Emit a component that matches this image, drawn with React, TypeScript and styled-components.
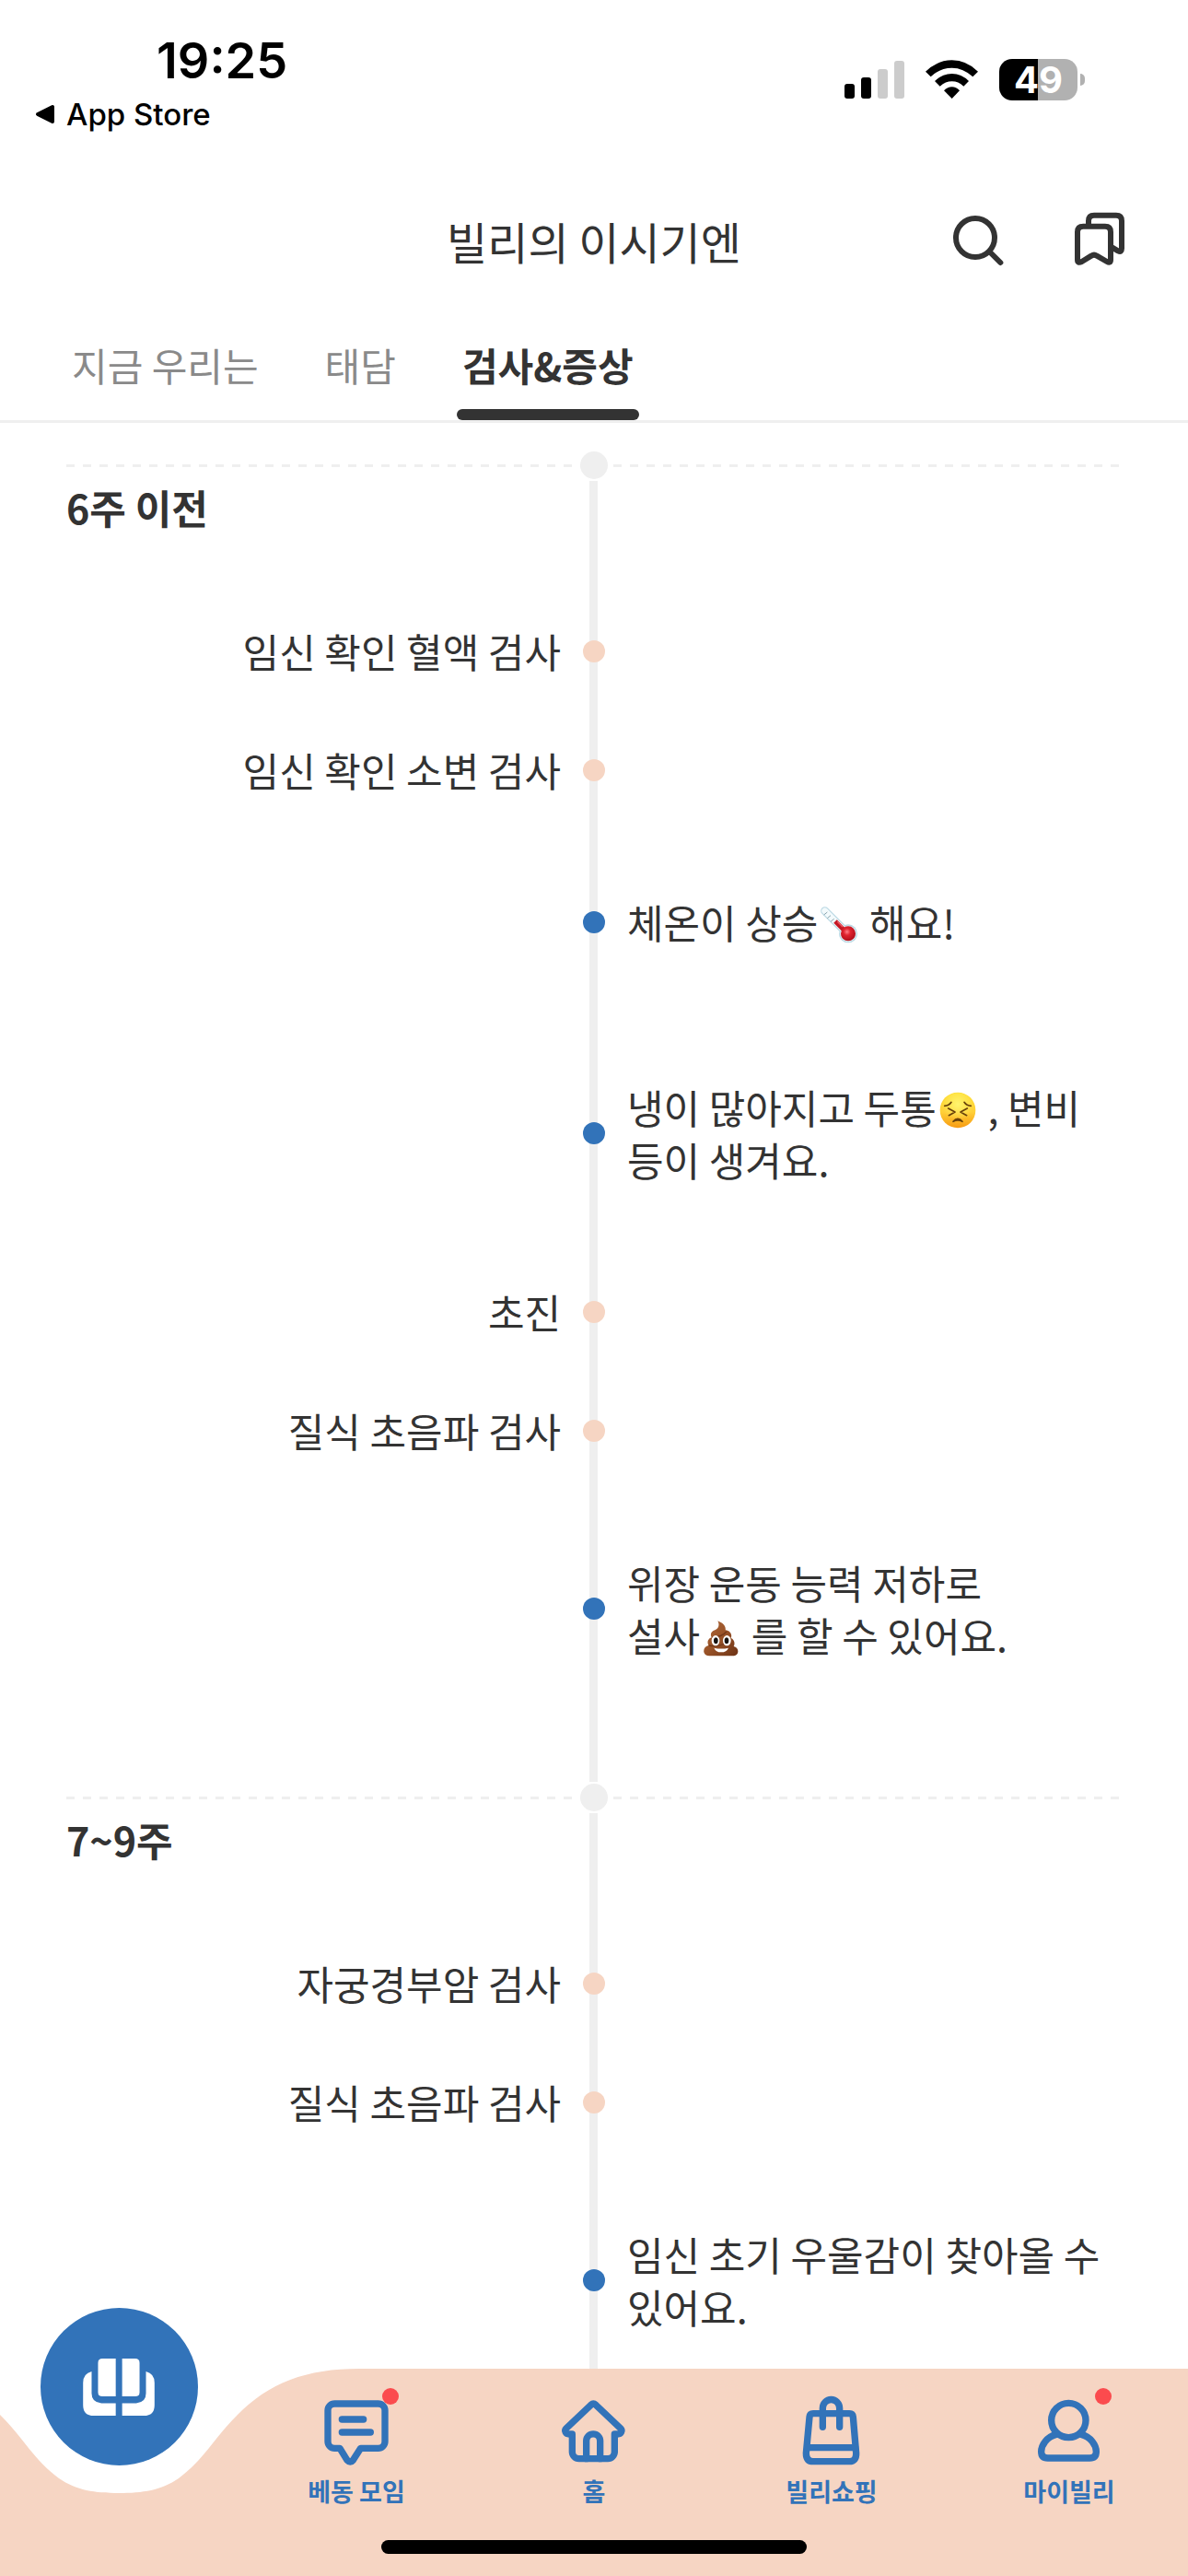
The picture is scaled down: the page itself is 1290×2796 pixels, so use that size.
import React from "react";
import styled, { createGlobalStyle } from "styled-components";

const color = {
  ink: "#333333",
  muted: "#8a8a8a",
  line: "#efefef",
  blue: "#3273b9",
  peach: "#f6d5c3",
  red: "#fb4b4e",
};

const GlobalStyle = createGlobalStyle`
  *, *::before, *::after { box-sizing: border-box; }
  body {
    margin: 0;
    background: #ffffff;
    color: ${color.ink};
    font-family: "Noto Sans CJK KR", sans-serif;
    word-break: keep-all;
  }
  button {
    border: 0;
    padding: 0;
    background: none;
    color: inherit;
    font: inherit;
    cursor: pointer;
  }
  svg { display: block; }
`;

const Screen = styled.div`
  display: flex;
  flex-direction: column;
  height: 100vh;
  overflow: hidden;
`;

const StatusBar = styled.div`
  display: flex;
  justify-content: space-between;
  align-items: flex-start;
  flex-shrink: 0;
  height: 186px;
  padding: 36px 120px 0 38px;
  color: #000000;
  font-family: Inter, sans-serif;
`;

const StatusLeft = styled.div`
  display: flex;
  flex-direction: column;
`;

const Clock = styled.span`
  padding-left: 132px;
  font-size: 54px;
  font-weight: 600;
  line-height: 60px;
`;

const BackLink = styled.a`
  display: flex;
  align-items: center;
  gap: 12px;
  margin-top: 8px;
  color: inherit;
  font-size: 33px;
  font-weight: 500;
  line-height: 40px;
  text-decoration: none;
`;

const StatusIcons = styled.div`
  display: flex;
  align-items: center;
  gap: 23px;
  padding-top: 28px;
`;

const Battery = styled.div`
  position: relative;
  width: 85px;
  height: 45px;
  border-radius: 14px;
  background: linear-gradient(to right, #000000 49%, #b1b1b1 49%);
  color: #ffffff;
  font-size: 40px;
  font-weight: 700;
  line-height: 45px;
  text-align: center;

  &::after {
    content: "";
    position: absolute;
    top: 16px;
    right: -8px;
    width: 5px;
    height: 13px;
    border-radius: 0 6px 6px 0;
    background: #b1b1b1;
  }
`;

const Header = styled.header`
  display: grid;
  grid-template-columns: 1fr auto 1fr;
  align-items: center;
  flex-shrink: 0;
  height: 150px;
  padding: 0 60px;
`;

const Title = styled.h1`
  grid-column: 2;
  margin: 0;
  font-size: 48px;
  font-weight: 400;
  line-height: 72px;
`;

const HeaderActions = styled.div`
  display: flex;
  justify-content: flex-end;
  gap: 60px;
`;

const Tabs = styled.nav`
  display: flex;
  gap: 60px;
  flex-shrink: 0;
  padding: 0 72px;
  border-bottom: 3px solid ${color.line};
`;

const Tab = styled.button<{ $active?: boolean }>`
  display: flex;
  flex-direction: column;
  padding: 30px 0 0;
  color: ${(p) => (p.$active ? color.ink : color.muted)};
  font-size: 42px;
  font-weight: ${(p) => (p.$active ? 700 : 400)};
  line-height: 60px;

  span { padding: 0 6px; }

  &::after {
    content: "";
    width: 100%;
    height: 12px;
    margin-top: 18px;
    border-radius: 6px;
    background: ${(p) => (p.$active ? color.ink : "transparent")};
  }
`;

const Timeline = styled.main`
  flex: 1;
  min-height: 0;
  overflow: hidden;
  padding: 31px 72px 0;
`;

const Section = styled.section`
  position: relative;
  padding-bottom: 61px;

  &::before {
    content: "";
    position: absolute;
    top: 32px;
    bottom: 2px;
    left: 50%;
    width: 9px;
    margin-left: -5px;
    background: ${color.line};
  }
`;

const Divider = styled.div`
  display: flex;
  align-items: center;
  justify-content: center;
  height: 30px;
  background: repeating-linear-gradient(
      to right,
      ${color.line} 0 9px,
      transparent 9px 18px
    )
    center / 100% 3px no-repeat;

  &::before {
    content: "";
    width: 30px;
    height: 30px;
    border-radius: 50%;
    background: ${color.line};
  }
`;

const Week = styled.h2`
  margin: 0 0 62px;
  font-size: 43px;
  font-weight: 700;
  line-height: 60px;
`;

const Items = styled.ul`
  margin: 0;
  padding: 0;
  list-style: none;
`;

const Item = styled.li<{ $symptom: boolean }>`
  display: grid;
  grid-template-columns: 1fr 72px 1fr;
  align-items: center;
  padding: ${(p) => (p.$symptom ? "72px 0" : "36px 0")};

  &::before {
    content: "";
    position: relative;
    grid-column: 2;
    grid-row: 1;
    justify-self: center;
    width: 24px;
    height: 24px;
    border-radius: 50%;
    background: ${(p) => (p.$symptom ? color.blue : color.peach)};
  }
`;

const ItemText = styled.p<{ $symptom: boolean }>`
  grid-row: 1;
  grid-column: ${(p) => (p.$symptom ? 3 : 1)};
  margin: 0;
  font-size: 43px;
  line-height: 57px;
  text-align: ${(p) => (p.$symptom ? "left" : "right")};
  white-space: nowrap;

  svg {
    display: inline-block;
    width: 40px;
    height: 40px;
    margin: 0 3px;
    vertical-align: -5px;
  }
`;

const BottomBar = styled.nav`
  position: fixed;
  right: 0;
  bottom: 0;
  left: 0;
  display: grid;
  grid-template-columns: repeat(5, 1fr);
  align-items: start;
  height: 225px;
  background: ${color.peach};
`;

const Notch = styled.svg`
  position: absolute;
  top: 0;
  left: 0;
`;

const LogoButton = styled.button`
  position: relative;
  display: flex;
  align-items: center;
  justify-content: center;
  justify-self: center;
  width: 171px;
  height: 171px;
  margin-top: -66px;
  border-radius: 50%;
  background: ${color.blue};
`;

const NavItem = styled.button`
  position: relative;
  display: flex;
  flex-direction: column;
  align-items: center;
  padding-top: 26px;
  color: ${color.blue};
  font-size: 27px;
  font-weight: 700;
  line-height: 40px;

  svg { margin-bottom: 3px; }
`;

const Badge = styled.i`
  position: absolute;
  top: 21px;
  left: 50%;
  width: 18px;
  height: 18px;
  margin-left: 28px;
  border-radius: 50%;
  background: ${color.red};
`;

const HomeIndicator = styled.div`
  position: absolute;
  bottom: 24px;
  left: 50%;
  width: 462px;
  height: 15px;
  border-radius: 8px;
  background: #000000;
  transform: translateX(-50%);
`;

const Thermometer = () => (
  <svg viewBox="0 0 120 120" role="img" aria-label="🌡️">
    <defs>
      <radialGradient id="bulb" cx="0.42" cy="0.38" r="0.6">
        <stop offset="0" stopColor="#ff8088" />
        <stop offset="0.4" stopColor="#e0232e" />
        <stop offset="1" stopColor="#b3101c" />
      </radialGradient>
    </defs>
    <path d="M14 14L84 84" stroke="#bcd9e4" strokeWidth="27" strokeLinecap="round" />
    <circle cx="90" cy="88" r="30" fill="#bcd9e4" />
    <path d="M14 14L84 84" stroke="#f3fafc" strokeWidth="20" strokeLinecap="round" />
    <circle cx="90" cy="88" r="26" fill="#e9f3f6" />
    <path d="M48 48L86 86" stroke="#c41824" strokeWidth="15" />
    <path d="M55 49L72 66" stroke="#f0606a" strokeWidth="4" />
    <path d="M11 27L22 18M22 38L33 29M33 49L44 40" stroke="#8aa4ae" strokeWidth="3" fill="none" />
    <circle cx="90" cy="88" r="24" fill="url(#bulb)" />
  </svg>
);

const PerseveringFace = () => (
  <svg viewBox="0 0 120 120" role="img" aria-label="😣">
    <defs>
      <linearGradient id="face" x1="0" y1="0" x2="0" y2="1">
        <stop offset="0" stopColor="#ffdf35" />
        <stop offset="0.55" stopColor="#ffd038" />
        <stop offset="1" stopColor="#f79a12" />
      </linearGradient>
      <radialGradient id="shine" cx="0.5" cy="0.35" r="0.5">
        <stop offset="0" stopColor="#fff56e" />
        <stop offset="1" stopColor="#fff56e" stopOpacity="0" />
      </radialGradient>
    </defs>
    <circle cx="60" cy="60" r="58" fill="url(#face)" />
    <circle cx="60" cy="56" r="52" fill="url(#shine)" />
    <g fill="none" stroke="#67400a" strokeWidth="5" strokeLinecap="round" strokeLinejoin="round">
      <path d="M17 46Q31 46 39 34M103 46Q89 46 81 34" />
      <path d="M29 54L51 66L31 77M91 54L69 66L89 77" />
      <path d="M45 97Q60 79 75 97Q60 89 45 97Z" fill="#67400a" />
    </g>
  </svg>
);

const Poo = () => (
  <svg viewBox="0 0 120 120" role="img" aria-label="💩">
    <defs>
      <linearGradient id="poo" x1="0" y1="0" x2="1" y2="1">
        <stop offset="0" stopColor="#b06a3c" />
        <stop offset="0.5" stopColor="#985227" />
        <stop offset="1" stopColor="#6c3215" />
      </linearGradient>
    </defs>
    <path
      d="M49 4C62 9 77 19 74 34C90 36 97 48 92 60C104 65 106 78 101 87C114 90 118 101 113 111Q109 118 96 118H22Q7 118 4 106C2 94 9 86 19 84C13 73 18 61 29 58C23 45 29 38 40 34C52 28 56 17 49 4Z"
      fill="url(#poo)"
    />
    <path d="M30 57Q60 58 78 39M21 84Q65 92 90 62" stroke="#73391a" strokeWidth="4" fill="none" />
    <ellipse cx="42" cy="68" rx="13" ry="17" fill="#ffffff" />
    <ellipse cx="79" cy="68" rx="13" ry="17" fill="#ffffff" />
    <ellipse cx="43" cy="68" rx="7" ry="10" fill="#171310" />
    <ellipse cx="78" cy="68" rx="7" ry="10" fill="#171310" />
    <path d="M37 92Q60 97 84 92Q78 106 60 106Q43 106 37 92Z" fill="#ffffff" />
  </svg>
);

type Entry = { symptom?: boolean; text: React.ReactNode };

const sections: { week: string; entries: Entry[] }[] = [
  {
    week: "6주 이전",
    entries: [
      { text: "임신 확인 혈액 검사" },
      { text: "임신 확인 소변 검사" },
      { symptom: true, text: <>체온이 상승<Thermometer /> 해요!</> },
      {
        symptom: true,
        text: <>냉이 많아지고 두통<PerseveringFace /> , 변비<br />등이 생겨요.</>,
      },
      { text: "초진" },
      { text: "질식 초음파 검사" },
      {
        symptom: true,
        text: <>위장 운동 능력 저하로<br />설사<Poo /> 를 할 수 있어요.</>,
      },
    ],
  },
  {
    week: "7~9주",
    entries: [
      { text: "자궁경부암 검사" },
      { text: "질식 초음파 검사" },
      { symptom: true, text: <>임신 초기 우울감이 찾아올 수<br />있어요.</> },
    ],
  },
];

const NavIcon = ({ x, children }: { x: number; children: React.ReactNode }) => (
  <svg
    width="84"
    height="84"
    viewBox={`${x} 111 252 252`}
    fill="none"
    stroke="currentColor"
    strokeWidth="22"
    strokeLinecap="round"
    strokeLinejoin="round"
    aria-hidden="true"
  >
    {children}
  </svg>
);

const navItems = [
  {
    label: "베동 모임",
    badge: true,
    icon: (
      <NavIcon x={135}>
        <path d="M190 147H332A22 22 0 0 1 354 169V270A22 22 0 0 1 332 292H275L250 331Q241 342 231 331L207 292H190A22 22 0 0 1 168 270V169A22 22 0 0 1 190 147Z" />
        <path d="M214 198H284M214 240H307" />
      </NavIcon>
    ),
  },
  {
    label: "홈",
    icon: (
      <NavIcon x={909}>
        <path d="M1025 151Q1033 144 1041 151L1121 227C1130 236 1122 246 1112 246H1102V304A22 22 0 0 1 1080 326H986A22 22 0 0 1 964 304V246H954C944 246 936 236 945 227Z" />
        <path d="M1010 326V268A22 22 0 0 1 1055 268V326" />
      </NavIcon>
    ),
  },
  {
    label: "빌리쇼핑",
    icon: (
      <NavIcon x={243}>
        <path d="M309 179H427Q438 179 439 190L449 308Q450 335 427 335H309Q286 335 286 308L297 190Q298 179 309 179Z" />
        <path d="M290 290H446M340 223V162A27 28 0 0 1 395 162V223" />
      </NavIcon>
    ),
  },
  {
    label: "마이빌리",
    badge: true,
    icon: (
      <NavIcon x={1017}>
        <circle cx="1141" cy="201" r="56" />
        <path d="M1101 247C1070 254 1052 283 1052 303Q1052 324 1073 324H1210Q1231 324 1231 303C1231 283 1213 254 1182 247" />
      </NavIcon>
    ),
  },
];

export default function App() {
  return (
    <>
      <GlobalStyle />
      <Screen>
        <StatusBar>
          <StatusLeft>
            <Clock>19:25</Clock>
            <BackLink href="#">
              <svg width="22" height="22" viewBox="0 0 22 22" aria-hidden="true">
                <path d="M3 11L19 3V19Z" stroke="#000" strokeWidth="4" strokeLinejoin="round" />
              </svg>
              App Store
            </BackLink>
          </StatusLeft>
          <StatusIcons>
            <svg width="65" height="45" viewBox="108 72 195 135" aria-hidden="true">
              <rect x="108" y="153" width="33" height="48" rx="9" />
              <rect x="162" y="132" width="33" height="69" rx="9" />
              <rect x="216" y="105" width="33" height="96" rx="9" fill="#cccccc" />
              <rect x="270" y="78" width="33" height="123" rx="9" fill="#cccccc" />
            </svg>
            <svg width="57" height="45" viewBox="372 72 171 135" aria-hidden="true">
              <path d="M372 113Q411 76 458 76Q505 76 543 113L526 130Q495 101 458 101Q420 101 389 130Z" />
              <path d="M402 144Q427 120 458 120Q489 120 513 144L496 161Q479 145 458 145Q437 145 419 161Z" />
              <path d="M432 175Q444 163 458 163Q472 163 483 175L458 201Z" />
            </svg>
            <Battery>49</Battery>
          </StatusIcons>
        </StatusBar>

        <Header>
          <Title>빌리의 이시기엔</Title>
          <HeaderActions>
            <button type="button" aria-label="검색">
              <svg width="72" height="72" viewBox="18 30 216 216" fill="none" stroke={color.ink} strokeWidth="18" strokeLinecap="round">
                <circle cx="117" cy="129" r="63" />
                <path d="M166 177L199 210" />
              </svg>
            </button>
            <button type="button" aria-label="북마크">
              <svg width="72" height="72" viewBox="414 30 216 216" fill="none" stroke={color.ink} strokeWidth="18" strokeLinecap="round" strokeLinejoin="round">
                <path d="M469 92H540Q558 92 558 110V201Q558 214 546 207L513 188Q504 182 495 188L464 207Q450 214 450 201V110Q450 92 469 92Z" />
                <path d="M486 88V74Q486 56 504 56H576Q594 56 594 74V164Q594 178 582 172L562 160" />
              </svg>
            </button>
          </HeaderActions>
        </Header>

        <Tabs>
          <Tab type="button"><span>지금 우리는</span></Tab>
          <Tab type="button"><span>태담</span></Tab>
          <Tab type="button" $active aria-current="page"><span>검사&amp;증상</span></Tab>
        </Tabs>

        <Timeline>
          {sections.map((section) => (
            <Section key={section.week}>
              <Divider />
              <Week>{section.week}</Week>
              <Items>
                {section.entries.map((entry, i) => (
                  <Item key={i} $symptom={!!entry.symptom}>
                    <ItemText $symptom={!!entry.symptom}>{entry.text}</ItemText>
                  </Item>
                ))}
              </Items>
            </Section>
          ))}
        </Timeline>

        <BottomBar>
          <Notch width="390" height="136" viewBox="0 0 390 136" fill="#ffffff" aria-hidden="true">
            <path d="M0 0H390C333 0 292 15 257 51C233 75 220 100 194 119C175 132 155 135 129 135C103 135 83 132 64 119C38 100 25 75 1 51L0 50Z" />
          </Notch>
          <LogoButton type="button" aria-label="빌리">
            <svg width="78" height="62" viewBox="270 268 234 187" fill="#ffffff" aria-hidden="true">
              <path d="M377 268H333Q319 268 319 282V378Q319 392 333 392H377Z" />
              <path d="M398 268H441Q455 268 455 282V378Q455 392 441 392H398Z" />
              <path d="M298 310Q270 317 270 347V420Q270 455 305 455H377V414H330Q298 412 298 382Z" />
              <path d="M476 310Q504 317 504 347V420Q504 455 469 455H398V414H444Q476 412 476 382Z" />
            </svg>
          </LogoButton>
          {navItems.map((item) => (
            <NavItem type="button" key={item.label}>
              {item.icon}
              {item.label}
              {item.badge && <Badge />}
            </NavItem>
          ))}
          <HomeIndicator />
        </BottomBar>
      </Screen>
    </>
  );
}
